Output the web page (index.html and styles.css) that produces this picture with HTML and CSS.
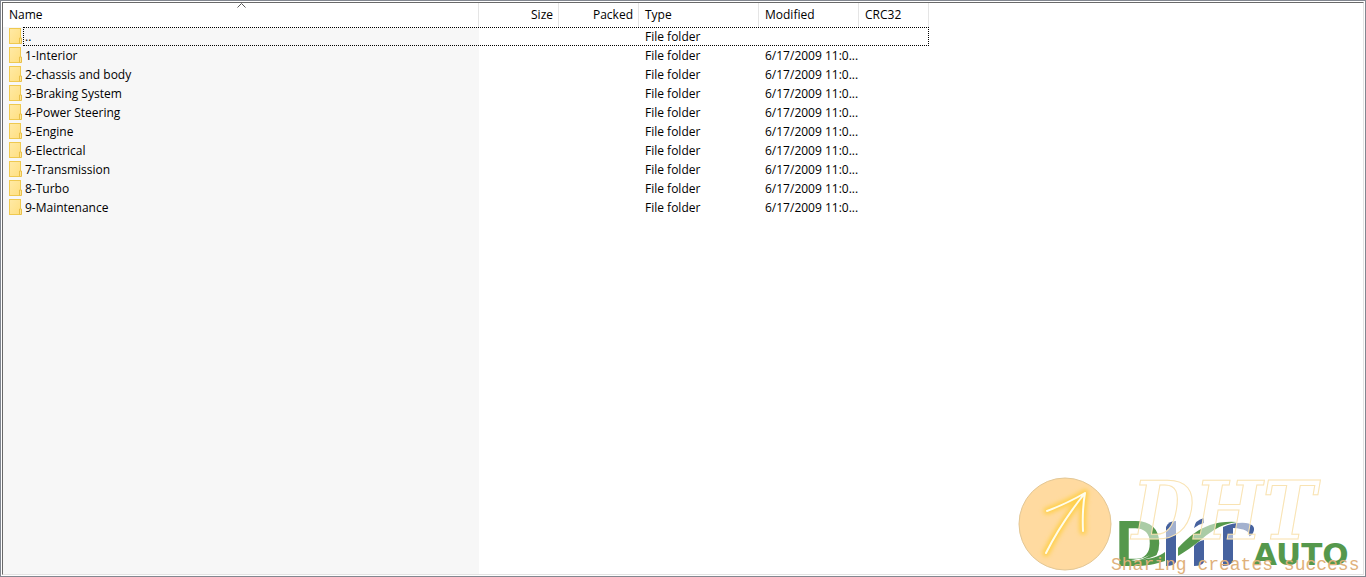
FILE: index.html
```html
<!DOCTYPE html>
<html lang="en">
<head>
<meta charset="utf-8">
<title>Archive contents</title>
<link rel="stylesheet" href="styles.css">
</head>
<body>
<svg class="defs" width="0" height="0" aria-hidden="true">
  <defs>
    <linearGradient id="fill" x1="0" y1="0" x2="1" y2="1"><stop offset="0" stop-color="#ffeaa6"/><stop offset="1" stop-color="#ffdf80"/></linearGradient>
    <symbol id="folder" viewBox="0 0 13 16">
      <rect x=".5" y=".5" width="11" height="15" fill="url(#fill)" stroke="#efc94f"/>
      <path d="M10.500 15.500v-5.500h2v5.500z" fill="#ffe694" stroke="#e9c04a"/>
    </symbol>
  </defs>
</svg>
<main class="frame">
  <div class="pane">
    <table class="files">
      <colgroup><col class="c-name"><col class="c-size"><col class="c-size"><col class="c-type"><col class="c-date"><col class="c-crc"></colgroup>
      <thead>
        <tr>
          <th scope="col" aria-sort="ascending"><button type="button">Name</button><svg class="sort" viewBox="0 0 9 5" aria-hidden="true"><path d="M.5 4.500l4-4 4 4" fill="none" stroke="#555"/></svg></th>
          <th scope="col" class="num"><button type="button">Size</button></th>
          <th scope="col" class="num"><button type="button">Packed</button></th>
          <th scope="col"><button type="button">Type</button></th>
          <th scope="col"><button type="button">Modified</button></th>
          <th scope="col"><button type="button">CRC32</button></th>
        </tr>
      </thead>
      <tbody>
        <tr class="focused"><td><span class="entry"><svg class="icon"><use href="#folder"/></svg>..</span></td><td></td><td></td><td>File folder</td><td></td><td></td></tr>
        <tr><td><span class="entry"><svg class="icon"><use href="#folder"/></svg>1-Interior</span></td><td></td><td></td><td>File folder</td><td>6/17/2009 11:0...</td><td></td></tr>
        <tr><td><span class="entry"><svg class="icon"><use href="#folder"/></svg>2-chassis and body</span></td><td></td><td></td><td>File folder</td><td>6/17/2009 11:0...</td><td></td></tr>
        <tr><td><span class="entry"><svg class="icon"><use href="#folder"/></svg>3-Braking System</span></td><td></td><td></td><td>File folder</td><td>6/17/2009 11:0...</td><td></td></tr>
        <tr><td><span class="entry"><svg class="icon"><use href="#folder"/></svg>4-Power Steering</span></td><td></td><td></td><td>File folder</td><td>6/17/2009 11:0...</td><td></td></tr>
        <tr><td><span class="entry"><svg class="icon"><use href="#folder"/></svg>5-Engine</span></td><td></td><td></td><td>File folder</td><td>6/17/2009 11:0...</td><td></td></tr>
        <tr><td><span class="entry"><svg class="icon"><use href="#folder"/></svg>6-Electrical</span></td><td></td><td></td><td>File folder</td><td>6/17/2009 11:0...</td><td></td></tr>
        <tr><td><span class="entry"><svg class="icon"><use href="#folder"/></svg>7-Transmission</span></td><td></td><td></td><td>File folder</td><td>6/17/2009 11:0...</td><td></td></tr>
        <tr><td><span class="entry"><svg class="icon"><use href="#folder"/></svg>8-Turbo</span></td><td></td><td></td><td>File folder</td><td>6/17/2009 11:0...</td><td></td></tr>
        <tr><td><span class="entry"><svg class="icon"><use href="#folder"/></svg>9-Maintenance</span></td><td></td><td></td><td>File folder</td><td>6/17/2009 11:0...</td><td></td></tr>
      </tbody>
    </table>
  </div>
  <svg class="watermark" viewBox="0 0 350 107" role="img" aria-label="DHT Auto, Sharing creates success">
    <defs><filter id="glow" x="-30%" y="-30%" width="160%" height="160%"><feGaussianBlur stdDeviation="2"/></filter></defs>
    <!-- arrow badge -->
    <circle cx="49" cy="54" r="46" fill="#ffdaa0" stroke="#e3c795"/>
    <g fill="none" stroke-linecap="round" stroke-linejoin="round">
      <path d="M30 83Q45 53 69 23M31 41Q52 33 69 23Q66 40 67 61" stroke="#ffd04d" stroke-width="7" filter="url(#glow)"/>
      <path d="M30 83Q45 53 69 23M31 41Q52 33 69 23Q66 40 67 61" stroke="#fffdea" stroke-width="2"/>
    </g>
    <!-- company mark: letter, bars and the swoosh running through them -->
    <text class="mark" x="99" y="96">D</text>
    <path d="M119 90C128 90 140 87 150 80V98H119Z" fill="#fff"/>
    <path d="M104 95V89H121C131 90 141 88 149 82V91C140 94 130 96 118 96H104Z" fill="#55984c"/>
    <path d="M115 90C120 92 128 89 134 85C127 89 122 89 115 90Z" fill="#fff"/>
    <g fill="#46629f">
      <path d="M150 96V57Q152 51 160 51V92Q158 96 150 96Z"/>
      <path d="M178 58Q179 50 188 48V53Q183 54 178 58Z"/>
      <path d="M178 76Q182 71 188 70V92Q186 96 178 96Z"/>
      <path d="M207 57Q219 52 230 53Q241 55 237 63Q235 67 233 66Q234 59 217 58V91Q215 96 207 96Z"/>
    </g>
    <path d="M162 78C173 66 183 59 194 55Q206 51 221 52Q207 54 198 60C187 67 179 76 162 86Z" fill="#55984c"/>
    <text class="auto" x="237" y="95">AUTO</text>
    <text class="outline" x="116" y="69">DHT</text>
    <text class="slogan" x="95" y="100">Sharing creates success</text>
  </svg>
</main>
</body>
</html>
```

FILE: styles.css
```css
* { box-sizing: border-box; }
body {
  margin: 0;
  background: #fff;
  color: #000;
  font: 12px/18px "Open Sans", "Noto Sans", sans-serif;
}
.defs { position: absolute; }
.frame {
  position: relative;
  display: flex;
  min-height: 100vh;
  padding: 1px;
  border: 1px solid #828790;
}
.pane {
  flex: 1;
  border: 1px solid #696969;
  border-right-color: #e3e3e3;
  border-bottom-color: #e3e3e3;
  background: linear-gradient(#f7f7f7, #f7f7f7) 0 0 / 476px 100% no-repeat #fff;
}
.files {
  width: 926px;
  table-layout: fixed;
  border-collapse: separate;
  border-spacing: 0;
}
.c-name { width: 476px; }
.c-size { width: 80px; }
.c-type { width: 120px; }
.c-date { width: 100px; }
.c-crc { width: 70px; }
th {
  position: relative;
  height: 24px;
  padding: 0 5px 0 6px;
  border-right: 1px solid #e5e5e5;
  background: #fff;
  text-align: left;
  font-weight: 400;
}
th button {
  display: block;
  width: 100%;
  padding: 0;
  border: 0;
  background: none;
  color: inherit;
  font: inherit;
  text-align: inherit;
}
.num { text-align: right; }
.sort {
  position: absolute;
  top: 0;
  left: 50%;
  width: 9px;
  height: 5px;
  margin-left: -4px;
}
td {
  height: 19px;
  padding: 0 6px;
  white-space: nowrap;
}
.entry {
  display: flex;
  align-items: flex-start;
  gap: 3px;
}
.icon { width: 13px; height: 16px; }
.focused { position: relative; }
.focused::after {
  content: "";
  position: absolute;
  inset: 0 0 0 20px;
  border: 1px dotted #000;
}
.watermark {
  position: absolute;
  right: -1px;
  bottom: -1px;
  width: 350px;
  height: 107px;
}
.mark { font: bold 65px "Liberation Sans", Arial, sans-serif; fill: #55984c; }
.auto { font: bold 31px "DejaVu Sans", sans-serif; fill: #55984c; }
.outline {
  font: italic bold 80px "DejaVu Serif Condensed", "DejaVu Serif", serif;
  fill: #fff;
  fill-opacity: .5;
  stroke: #f9e3b2;
}
.slogan {
  font: 18px "Liberation Mono", "Courier New", monospace;
  fill: #dfb17b;
}
```
